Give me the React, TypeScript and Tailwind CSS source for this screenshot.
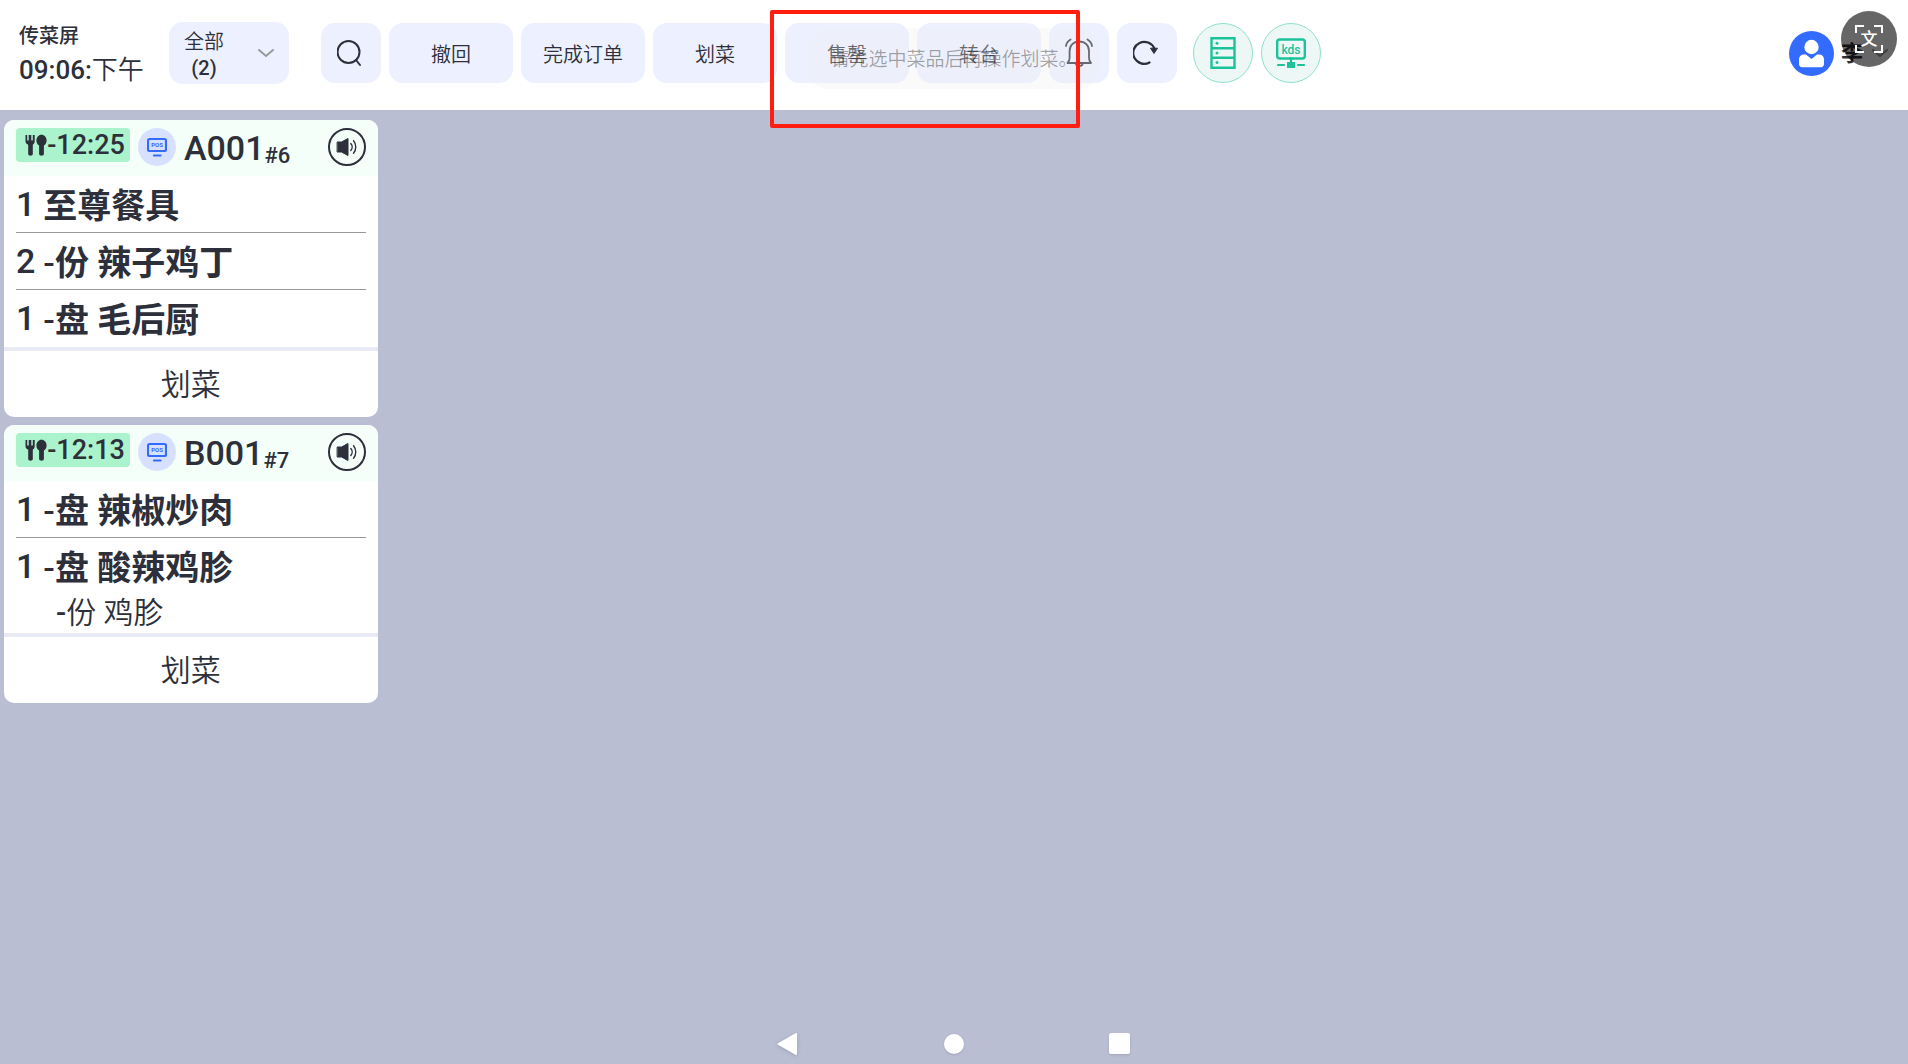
import { useState } from 'react';

type Dish = {
  count: number;
  unit?: string;
  name: string;
  extra?: string;
};

type Order = {
  table: string;
  seq: string;
  time: string;
  dishes: Dish[];
};

const orders: Order[] = [
  {
    table: 'A001',
    seq: '#6',
    time: '-12:25',
    dishes: [
      { count: 1, name: '至尊餐具' },
      { count: 2, unit: '份', name: '辣子鸡丁' },
      { count: 1, unit: '盘', name: '毛后厨' },
    ],
  },
  {
    table: 'B001',
    seq: '#7',
    time: '-12:13',
    dishes: [
      { count: 1, unit: '盘', name: '辣椒炒肉' },
      { count: 1, unit: '盘', name: '酸辣鸡胗', extra: '份 鸡胗' },
    ],
  },
];

const actions = ['撤回', '完成订单', '划菜', '售罄', '转台'];

function SearchIcon() {
  return (
    <svg width="28" height="28" viewBox="0 0 28 28" fill="none" stroke="#2d2f3a" strokeWidth="2" strokeLinecap="round">
      <circle cx="11.500" cy="13" r="11" />
      <path d="M19 21 23 26" />
    </svg>
  );
}

function BellIcon() {
  return (
    <svg width="28" height="30" viewBox="0 0 28 30" fill="none" stroke="#2d2f3a" strokeWidth="1.8" strokeLinecap="round" strokeLinejoin="round">
      <path d="M2.500 25h23.500c-1.600-1.600-2-2.800-2-5v-7c0-5.500-4-9.500-9.700-9.500S4.600 7.500 4.600 13v7c0 2.200-.5 3.400-2.100 5z" />
      <path d="M11 26c.6 2.600 6 2.600 6.600 0M14 3.500V2M1 8c.4-2.700 2-5 4.500-6.500M27 8c-.4-2.700-2-5-4.500-6.500" />
    </svg>
  );
}

function RefreshIcon() {
  return (
    <svg width="28" height="28" viewBox="0 0 28 28" fill="none">
      <path d="M21.300 9.500A11 11 0 1 0 16.500 23.500" stroke="#2d2f3a" strokeWidth="2.200" strokeLinecap="round" />
      <path d="M17.500 9.200h7l-3.500 5.300z" fill="#2d2f3a" stroke="#2d2f3a" strokeLinejoin="round" />
    </svg>
  );
}

function CabinetIcon() {
  return (
    <svg width="26" height="32" viewBox="0 0 26 32" fill="none" stroke="#1cc29a" strokeWidth="2.400">
      <path d="M1.500 1.200h23v29.600h-23zM1.500 11.300h23M1.500 20.800h23" />
      <g fill="#1cc29a" stroke="none">
        <circle cx="7" cy="6.300" r="1.500" />
        <circle cx="7" cy="16" r="1.500" />
        <circle cx="7" cy="25.500" r="1.500" />
      </g>
    </svg>
  );
}

function KdsIcon() {
  return (
    <svg width="30" height="30" viewBox="0 0 30 30">
      <rect x="1.200" y="1.500" width="27.600" height="19" rx="2.500" fill="none" stroke="#1cc29a" strokeWidth="2.400" />
      <text x="15" y="15.500" textAnchor="middle" fontSize="12" className="font-['Roboto',sans-serif] font-medium" fill="#1cc29a">
        kds
      </text>
      <path d="M15 20v4M2 27h6M22 27h6" stroke="#1cc29a" strokeWidth="2.200" strokeLinecap="round" />
      <rect x="11" y="24" width="8" height="6" fill="#1cc29a" />
    </svg>
  );
}

function CutleryIcon() {
  return (
    <svg width="22" height="22" viewBox="0 0 22 22" fill="#2d2f3a">
      <path d="M.5 1h1.700v5.500h1.500V1h2.600v5.500h1.500V1h1.900v6c0 1.800-.7 3-1.900 3.700V20c0 2.200-4.600 2.200-4.600 0v-9.300C1.200 10 .5 8.800.5 7z" />
      <path d="M16.500.8c3 0 5.100 2.600 5.100 5.700 0 2.400-1.100 4.200-2.700 5.100V20c0 2.200-4.800 2.200-4.800 0v-8.400c-1.600-.9-2.700-2.700-2.700-5.100C11.400 3.400 13.500.8 16.500.8z" />
    </svg>
  );
}

function PosIcon() {
  return (
    <svg width="20" height="20" viewBox="0 0 20 20">
      <rect x="1" y="2" width="18" height="12" rx="1.500" fill="none" stroke="#346bff" strokeWidth="2.200" />
      <text x="10" y="10.300" textAnchor="middle" fontSize="6" className="font-['Roboto',sans-serif] font-bold" fill="#346bff">
        POS
      </text>
      <path d="M7 18.500h6.500" stroke="#346bff" strokeWidth="2.200" strokeLinecap="round" />
    </svg>
  );
}

function SpeakerIcon() {
  return (
    <svg width="22" height="20" viewBox="0 0 22 20" fill="none" stroke="#2d2f3a" strokeLinecap="round">
      <path d="M1.500 5h4L12 1.500v17L5.500 15h-4z" fill="#2d2f3a" strokeLinejoin="round" />
      <path d="M14.800 6.500c1.800 2 1.800 5 0 7M17.500 3.800c3 3.400 3 9 0 12.400" strokeWidth="1.400" />
    </svg>
  );
}

function AvatarIcon() {
  return (
    <svg width="45" height="45" viewBox="0 0 45 45">
      <circle cx="22.500" cy="22.500" r="22.500" fill="#346bff" />
      <circle cx="22.500" cy="16" r="7.200" fill="#fff" />
      <path d="M15 23.500h2l5.500 4.500 5.500-4.500h2c3.300 0 5 2 5 5v4.500c0 2-1.200 3.200-3 3.200H13c-1.800 0-3-1.200-3-3.200v-4.500c0-3 1.700-5 5-5z" fill="#fff" />
    </svg>
  );
}

function OrderCard({ order }: { order: Order }) {
  return (
    <article className="overflow-hidden rounded-[10px] bg-white">
      <header className="flex h-14 items-start bg-[#f3fff8] px-3 pt-2">
        <div className="flex h-[34px] w-[114px] items-center justify-center rounded bg-[#abf3cd] pl-1">
          <CutleryIcon />
          <span className="text-[27px] leading-[34px] font-medium">{order.time}</span>
        </div>
        <span className="ml-2 flex size-[38px] items-center justify-center rounded-full bg-[#d8e0ff]">
          <PosIcon />
        </span>
        <div className="ml-2 flex items-end">
          <h2 className="text-[34px] leading-10 font-medium">{order.table}</h2>
          <span className="text-[22px] leading-6 font-medium">{order.seq}</span>
        </div>
        <button
          type="button"
          aria-label="播报"
          className="ml-auto flex size-[38px] items-center justify-center rounded-full border-2 border-[#2d2f3a]"
        >
          <SpeakerIcon />
        </button>
      </header>

      <ul className="divide-y divide-[#999999] pb-px">
        {order.dishes.map((dish) => (
          <li key={dish.name} className="mx-3">
            <div className="flex h-14 items-center gap-2 text-[34px] leading-[52px]">
              <span className="font-medium">{dish.count}</span>
              <span className="pt-1 font-bold">
                {dish.unit && (
                  <>
                    <span className="font-medium">-</span>
                    {dish.unit}{' '}
                  </>
                )}
                {dish.name}
              </span>
            </div>
            {dish.extra && (
              <p className="h-[38px] pl-10 text-[30px] leading-[38px] font-[350]">
                <span className="font-medium">-</span>
                {dish.extra}
              </p>
            )}
          </li>
        ))}
      </ul>

      <button type="button" className="h-[70px] w-full border-t-4 border-[#e8ebf5] text-[30px] font-[350]">
        划菜
      </button>
    </article>
  );
}

export default function App() {
  const [filter, setFilter] = useState('全部');

  return (
    <div className="relative flex min-h-screen flex-col overflow-hidden bg-[#babed3] font-['Roboto','Noto_Sans_CJK_SC',sans-serif] text-[#2d2f3a]">
      {/* Top bar */}
      <header className="flex h-[110px] items-center bg-white pr-[19px] pb-1 pl-[19px]">
        <div className="w-[150px] shrink-0 pt-0.5">
          <h1 className="text-xl leading-8 font-medium">传菜屏</h1>
          <p className="text-[26px] leading-9 font-[350]">
            <span className="font-medium">09:06:</span>下午
          </p>
        </div>

        <label className="relative flex h-[62px] w-[120px] shrink-0 items-center justify-between rounded-[14px] bg-[#edf1ff] pr-3.5 pl-[15px] text-xl">
          <span className="flex flex-col items-center pt-1 leading-[26px]">
            <span className="font-[350]">{filter}</span>
            <span className="font-medium">(2)</span>
          </span>
          <svg width="18" height="10" viewBox="0 0 18 10" fill="none" stroke="#999" strokeWidth="2" strokeLinecap="round">
            <path d="M2 2l7 6 7-6" />
          </svg>
          <select
            aria-label="订单筛选"
            value={filter}
            onChange={(e) => setFilter(e.target.value)}
            className="absolute inset-0 opacity-0"
          >
            <option>全部</option>
          </select>
        </label>

        <div className="ml-8 flex shrink-0 gap-2">
          <button type="button" aria-label="搜索" className="flex size-[60px] items-center justify-center rounded-[14px] bg-[#edf1ff]">
            <SearchIcon />
          </button>
          {actions.map((action) => (
            <button key={action} type="button" className="h-[60px] w-[124px] rounded-[14px] bg-[#edf1ff] pt-1 text-xl font-[350]">
              {action}
            </button>
          ))}
          <button type="button" aria-label="通知" className="flex size-[60px] items-center justify-center rounded-[14px] bg-[#edf1ff]">
            <BellIcon />
          </button>
          <button type="button" aria-label="刷新" className="flex size-[60px] items-center justify-center rounded-[14px] bg-[#edf1ff]">
            <RefreshIcon />
          </button>
        </div>

        <div className="ml-4 flex shrink-0 gap-2">
          <button type="button" aria-label="取餐柜" className="flex size-[60px] items-center justify-center rounded-full border border-[#8fe0cb] bg-[#edf8f6]">
            <CabinetIcon />
          </button>
          <button type="button" aria-label="KDS 设备" className="flex size-[60px] items-center justify-center rounded-full border border-[#8fe0cb] bg-[#edf8f6]">
            <KdsIcon />
          </button>
        </div>

        <button type="button" className="ml-auto flex shrink-0 items-center text-[22px] font-bold">
          <AvatarIcon />
          <span className="ml-[7px]">李</span>
          <svg className="ml-2" width="18" height="10" viewBox="0 0 18 10" fill="none" stroke="#999" strokeWidth="2" strokeLinecap="round">
            <path d="M2 2l7 6 7-6" />
          </svg>
        </button>
      </header>

      {/* Orders */}
      <main className="grid flex-1 grid-cols-5 content-start gap-2 px-1 pt-2.5">
        <div className="flex flex-col gap-2">
          {orders.map((order) => (
            <OrderCard key={order.table} order={order} />
          ))}
        </div>
      </main>

      {/* System navigation */}
      <nav className="flex h-[41px] items-center justify-center gap-[145px] pr-0.5">
        <button type="button" aria-label="返回" className="drop-shadow-sm">
          <svg width="22" height="24" viewBox="0 0 22 24">
            <path d="M1.500 12 19 2v20z" fill="#fff" stroke="#fff" strokeWidth="2" strokeLinejoin="round" />
          </svg>
        </button>
        <button type="button" aria-label="主屏幕" className="size-5 rounded-full bg-white shadow-sm" />
        <button type="button" aria-label="最近任务" className="size-[21px] rounded-xs bg-white shadow-sm" />
      </nav>

      {/* Toast */}
      <div
        role="status"
        className="pointer-events-none absolute top-7 left-1/2 flex h-[61px] -translate-x-1/2 items-center rounded-[20px] bg-[#eeeeee]/30 px-[22px] pt-1 text-[19px] font-[350] whitespace-nowrap text-black/35"
      >
        请先选中菜品后再操作划菜。
      </div>

      {/* Marked region */}
      <div className="pointer-events-none absolute top-2.5 left-[770px] h-[118px] w-[310px] rounded-xs border-4 border-[#ff1e10]" />

      {/* Floating translate button */}
      <button
        type="button"
        aria-label="翻译"
        className="absolute top-[11px] right-[11px] flex size-14 items-center justify-center rounded-full bg-black/60"
      >
        <svg width="28" height="28" viewBox="0 0 28 28" fill="none" stroke="#fff" strokeWidth="2">
          <path d="M1 8V1h8M19 1h8v7M27 20v7h-8M9 27H1v-7" />
          <text x="14" y="19.500" textAnchor="middle" fontSize="17" fill="#fff" stroke="none" className="font-medium">
            文
          </text>
        </svg>
      </button>
    </div>
  );
}
